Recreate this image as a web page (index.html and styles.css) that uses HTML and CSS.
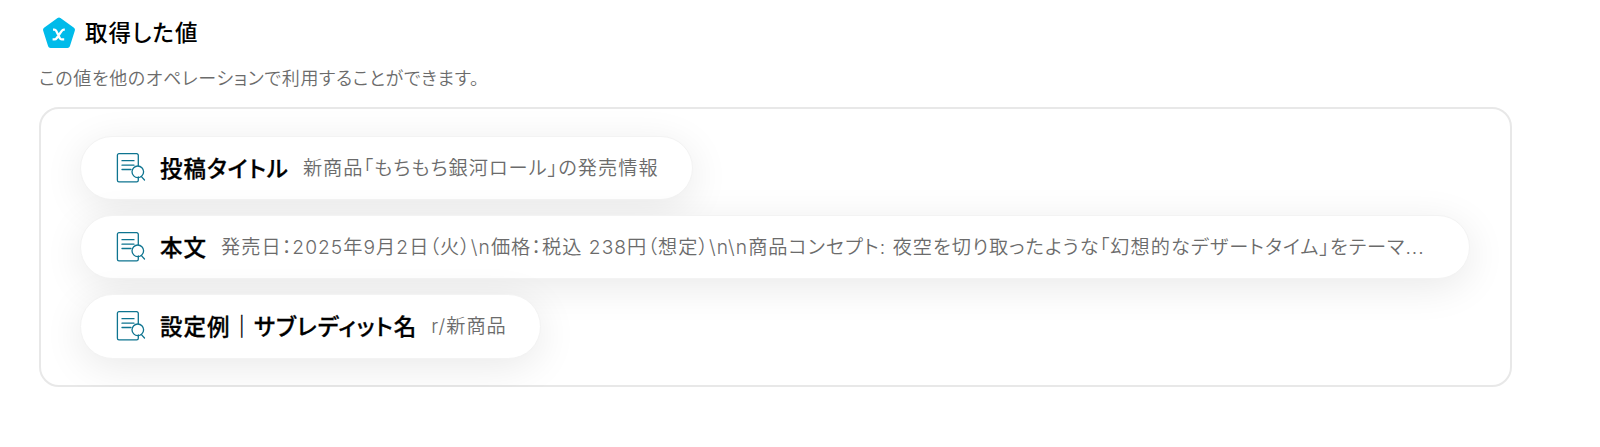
FILE: index.html
```html
<!DOCTYPE html>
<html lang="ja">

<head>
    <meta charset="utf-8">
    <title>取得した値</title>
    <meta name="viewport" content="width=device-width, initial-scale=1">
    <link rel="stylesheet" href="styles.css">
</head>

<body>

    <svg class="icon-defs" width="0" height="0">
        <symbol id="doc-search" viewBox="0 0 30 32">
            <path d="M22.3 13.5V3.3a1.6 1.6 0 0 0-1.6-1.6H3A1.6 1.6 0 0 0 1.4 3.3v25A1.6 1.6 0 0 0 3 29.9h17.7a1.6 1.6 0 0 0 1.6-1.6V25" />
            <path d="M6 8.7h12M6 13.2h12M6 17.5h9" />
            <circle cx="21.8" cy="19.8" r="5.8" />
            <path d="M25.2 24.4l3.3 3.6" />
        </symbol>
    </svg>

    <div class="output">
        <div class="heading">
            <svg class="badge" viewBox="0 0 34 34">
                <path d="M17 4L30.5 13.7L25.5 29.5H8.5L3.5 13.7Z" fill="#00bbea" stroke="#00bbea" stroke-width="5" stroke-linejoin="round" />
                <path d="M11 13.7h1.2c1.1 0 1.6.4 2.1 1.4l3.4 6.8c.5 1 1 1.5 2.1 1.5h2.4M22.8 13.7h-.8c-1.1 0-1.7.4-2.4 1.4l-4.8 6.9c-.7 1-1.3 1.4-2.4 1.4H10.6" fill="none" stroke="#fff" stroke-width="2.3" />
            </svg>
            <h2>取得した値</h2>
        </div>
        <p class="note">この値を他のオペレーションで利用することができます。</p>

        <div class="values">
            <div class="pill">
                <svg class="doc-icon"><use href="#doc-search" /></svg>
                <span class="name">投稿タイトル</span>
                <span class="value">新商品「もちもち銀河ロール」の発売情報</span>
            </div>
            <div class="pill pill-full">
                <svg class="doc-icon"><use href="#doc-search" /></svg>
                <span class="name">本文</span>
                <span class="value">発売日：2025年9月2日（火）\n価格：税込 238円（想定）\n\n商品コンセプト: 夜空を切り取ったような「幻想的なデザートタイム」をテーマ...</span>
            </div>
            <div class="pill">
                <svg class="doc-icon"><use href="#doc-search" /></svg>
                <span class="name">設定例｜サブレディット名</span>
                <span class="value">r/新商品</span>
            </div>
        </div>
    </div>

</body>

</html>
```
FILE: styles.css
```css
body {
    margin: 0;
    background-color: #fff;
    font-family: Inter, "Noto Sans CJK JP", sans-serif;
    font-feature-settings: "palt";
}

.icon-defs {
    display: block;
}

.output {
    width: 1473px;
    padding: 16px 0 0 39px;
}

.heading {
    display: flex;
    align-items: center;
    height: 34px;
}

.badge {
    width: 34px;
    height: 34px;
    margin-left: 3px;
}

h2 {
    margin: 0 0 0 9px;
    font-size: 22.5px;
    font-weight: 500;
    line-height: 34px;
    letter-spacing: 1.1px;
    color: #000;
}

.note {
    margin: 16px 0 0;
    font-size: 18px;
    font-weight: 350;
    line-height: 26px;
    letter-spacing: 0.65px;
    color: #6b6b6b;
    white-space: nowrap;
}

.values {
    display: flex;
    flex-direction: column;
    align-items: flex-start;
    gap: 15px;
    height: 280px;
    margin-top: 15px;
    padding: 27px 40px 0 39px;
    box-sizing: border-box;
    border: 2px solid #e8e8e8;
    border-radius: 20px;
}

.pill {
    display: flex;
    align-items: center;
    box-sizing: border-box;
    height: 64.2px;
    padding: 0 33px 3px 35px;
    background-color: #fff;
    border: 1px solid #f3f3f3;
    border-radius: 33px;
    box-shadow: 0 8px 40px rgba(0, 0, 0, 0.09);
    white-space: nowrap;
}

.pill-full {
    width: 100%;
}

.doc-icon {
    flex: none;
    width: 30px;
    height: 32px;
    margin-top: 2px;
    fill: none;
    stroke: #0e7490;
    stroke-width: 1.3;
    stroke-linecap: round;
}

.name {
    margin-left: 14px;
    font-size: 22.5px;
    font-weight: 500;
    letter-spacing: 1px;
    color: #000;
    -webkit-text-stroke: 0.3px #000;
}

.value {
    margin-left: 14px;
    font-size: 19.2px;
    font-weight: 350;
    letter-spacing: 1.04px;
    color: #6b6b6b;
}
```
